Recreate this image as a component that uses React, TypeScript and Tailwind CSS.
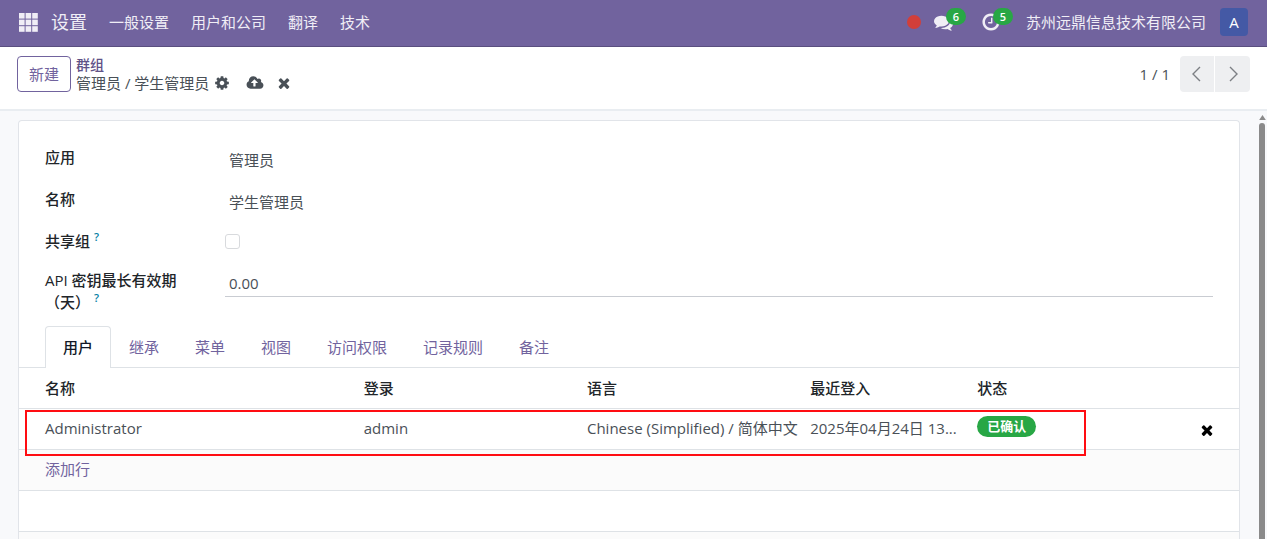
import { useState } from "react";
import type { ReactNode } from "react";

const COG =
  "M1152 896q0-106-75-181t-181-75-181 75-75 181 75 181 181 75 181-75 75-181zm512-109v222q0 12-8 23t-20 13l-185 28q-19 54-39 91 35 50 107 138 10 12 10 25t-9 23q-27 37-99 108t-94 71q-12 0-26-9l-138-108q-44 23-91 38-16 136-29 186-7 28-36 28h-222q-14 0-24.5-8.5t-11.5-21.5l-28-184q-49-16-90-37l-141 107q-10 9-25 9-14 0-25-11-126-114-165-168-7-10-7-23 0-12 8-23 15-21 51-66.5t54-70.5q-27-50-41-99l-183-27q-13-2-21-12.5t-8-23.5v-222q0-12 8-23t19-13l186-28q14-46 39-92-40-57-107-138-10-12-10-24 0-10 9-23 26-36 98.5-107.5t94.5-71.5q13 0 26 10l138 107q44-23 91-38 16-136 29-186 7-28 36-28h222q14 0 24.5 8.5t11.5 21.5l28 184q49 16 90 37l142-107q9-9 24-9 13 0 25 10 129 119 165 170 7 8 7 22 0 12-8 23-15 21-51 66.5t-54 70.5q26 50 41 98l183 28q13 2 21 12.5t8 23.5z";
const TIMES =
  "M1490 1322q0 40-28 68l-136 136q-28 28-68 28t-68-28l-294-294-294 294q-28 28-68 28t-68-28l-136-136q-28-28-28-68t28-68l294-294-294-294q-28-28-28-68t28-68l136-136q28-28 68-28t68 28l294 294 294-294q28-28 68-28t68 28l136 136q28 28 28 68t-28 68l-294 294 294 294q28 28 28 68z";
const CLOUD =
  "M1344 864q0-14-9-23l-352-352q-9-9-23-9t-23 9l-351 351q-10 12-10 24 0 14 9 23t23 9h224v352q0 13 9.5 22.5t22.5 9.5h192q13 0 22.5-9.5t9.500-22.5v-352h224q13 0 22.5-9.5t9.500-22.5zm640 288q0 159-112.5 271.5t-271.5 112.5h-1088q-185 0-316.5-131.5t-131.5-316.5q0-130 70-240t188-165q-2-30-2-43 0-212 150-362t362-150q156 0 285.5 87t188.5 231q71-62 166-62 106 0 181 75t75 181q0 76-41 138 130 31 213.5 135.5t83.5 238.5z";
const COMMENTS =
  "M1408 768q0 139-94 257t-256.5 186.5-353.5 68.5q-86 0-176-16-124 88-278 128-36 9-86 16h-3q-11 0-20.5-8t-11.5-21q-1-3-1-6.5t.5-6.5 2-6l2.500-5 3.500-5.500 4-5 4.500-5 4-4.500q5-6 23-25t26-29.500 22.500-29 25-38.500 20.500-44q-124-72-195-177t-71-224q0-139 94-257t256.500-186.500 353.500-68.500 353.500 68.500 256.500 186.500 94 257zm384 256q0 120-71 224.500t-195 176.500q10 24 20.500 44t25 38.500 22.500 29 26 29.500 23 25q1 1 4 4.500t4.500 5 4 5 3.500 5.500l2.500 5 2 6 .5 6.500-1 6.500q-3 14-13 22t-22 7q-50-7-86-16-154-40-278-128-90 16-176 16-271 0-472-132 58 4 88 4 161 0 309-45t264-129q125-92 192-212t67-254q0-77-23-152 129 71 204 178t75 230z";
const CLOCK =
  "M1024 544v448q0 14-9 23t-23 9h-320q-14 0-23-9t-9-23v-64q0-14 9-23t23-9h224v-352q0-14 9-23t23-9h64q14 0 23 9t9 23zm416 352q0-148-73-273t-198-198-273-73-273 73-198 198-73 273 73 273 198 198 273 73 273-73 198-198 73-273zm224 0q0 209-103 385.500t-279.500 279.500-385.500 103-385.500-103-279.500-279.500-103-385.500 103-385.500 279.500-279.500 385.500-103 385.500 103 279.500 279.500 103 385.500z";

function Glyph({ d, className, box = "0 0 1792 1792" }: { d: string; className: string; box?: string }) {
  return (
    <svg viewBox={box} className={className} fill="currentColor" aria-hidden="true">
      <path d={d} />
    </svg>
  );
}

function AppsIcon() {
  return (
    <svg viewBox="0 0 19 19" className="size-[19px]" fill="currentColor" aria-hidden="true">
      {[0, 6.6, 13.2].map((y) =>
        [0, 6.6, 13.2].map((x) => <rect key={`${x}-${y}`} x={x} y={y} width="5.6" height="5.6" />),
      )}
    </svg>
  );
}

function Chevron({ d }: { d: string }) {
  return (
    <svg viewBox="0 0 16 16" className="size-4" fill="none" stroke="currentColor" strokeWidth="1.4" aria-hidden="true">
      <path d={d} />
    </svg>
  );
}

function Tray({ label, count, children }: { label: string; count: number; children: ReactNode }) {
  return (
    <button type="button" aria-label={label} className="relative flex h-full items-center">
      {children}
      <span className="absolute top-2 left-3 flex h-[17px] w-5 items-center justify-center rounded-full bg-[#28a745] text-[11px] font-semibold text-white">
        {count}
      </span>
    </button>
  );
}

function Help() {
  return <span className="ml-1 inline-block align-top text-[11px] leading-[14px] font-semibold text-[#0180a5]">?</span>;
}

const MENUS = ["一般设置", "用户和公司", "翻译", "技术"];
const TABS = ["用户", "继承", "菜单", "视图", "访问权限", "记录规则", "备注"];

export default function App() {
  const [tab, setTab] = useState("用户");

  return (
    <div className="flex h-screen flex-col overflow-hidden bg-white font-['Open_Sans','Noto_Sans_CJK_SC',sans-serif] text-[15px] leading-[22px] text-[#495057]">
      <header className="flex h-[47px] shrink-0 items-center justify-between border-b border-[#5a4f7f] bg-[#71639e] pr-[19px] pb-[2px] pl-[19px] text-[#f0eef6]">
        <nav className="flex items-center">
          <button type="button" aria-label="应用菜单">
            <AppsIcon />
          </button>
          <a href="#" className="ml-[13px] text-lg">设置</a>
          <div className="ml-[22px] flex gap-[22px]">
            {MENUS.map((m) => (
              <a key={m} href="#">{m}</a>
            ))}
          </div>
        </nav>
        <div className="flex h-full items-center">
          <span className="size-[14px] rounded-full bg-[#d23f3a]" />
          <div className="ml-[13px] flex h-full gap-7">
            <Tray label="讨论" count={6}>
              <Glyph d={COMMENTS} className="size-[19px]" />
            </Tray>
            <Tray label="活动" count={5}>
              <Glyph d={CLOCK} className="size-5" />
            </Tray>
          </div>
          <span className="ml-[25px]">苏州远鼎信息技术有限公司</span>
          <button type="button" className="ml-[14px] size-7 rounded bg-[#4459a5] text-white">A</button>
        </div>
      </header>

      <div className="flex h-16 shrink-0 items-start justify-between border-b-2 border-[#e9edf1] pt-[9px] pr-[17px] pl-[17px]">
        <div className="flex">
          <button type="button" className="h-9 w-[54px] rounded border border-[#71639e] text-[#71639e]">新建</button>
          <div className="ml-[5px] flex flex-col">
            <a href="#" className="h-[18px] text-sm leading-[18px] font-medium text-[#5f5287]">群组</a>
            <div className="flex h-[18px] items-center leading-[18px]">
              <span>管理员 / 学生管理员</span>
              <button type="button" aria-label="操作" className="ml-[5px]"><Glyph d={COG} className="size-4" /></button>
              <button type="button" aria-label="保存" className="ml-4"><Glyph d={CLOUD} box="0 0 2048 1792" className="h-4 w-[18px]" /></button>
              <button type="button" aria-label="放弃" className="ml-3"><Glyph d={TIMES} className="size-4" /></button>
            </div>
          </div>
        </div>
        <div className="flex items-center">
          <span className="mr-[10px]">1 / 1</span>
          <div className="flex gap-px text-[#7c7f84]">
            <button type="button" aria-label="上一页" className="flex h-9 w-[34px] items-center justify-center rounded-l bg-[#eeeff1]"><Chevron d="M11 1 4 8l7 7" /></button>
            <button type="button" aria-label="下一页" className="flex h-9 w-[35px] items-center justify-center rounded-r bg-[#eeeff1]"><Chevron d="m5 1 7 7-7 7" /></button>
          </div>
        </div>
      </div>

      <div className="flex min-h-0 flex-1 bg-[#f8f9fb]">
        <main className="mt-[9px] ml-[18px] flex-1 overflow-hidden rounded-t border border-b-0 border-[#e1e4e9] bg-white">
          <form className="grid grid-cols-[180px_1fr] px-[26px] pt-[25px]">
            <label htmlFor="app" className="h-[42px] font-medium text-[#212529]">应用</label>
            <input id="app" defaultValue="管理员" className="h-[26px] px-1 outline-none" />
            <label htmlFor="name" className="h-[42px] font-medium text-[#212529]">名称</label>
            <input id="name" defaultValue="学生管理员" className="h-[26px] px-1 outline-none" />
            <label htmlFor="share" className="h-[39px] font-medium text-[#212529]">共享组<Help /></label>
            <input id="share" type="checkbox" className="mt-1 size-[15px] appearance-none rounded-[3px] border border-[#d8dadd] bg-white checked:bg-[#71639e]" />
            <label htmlFor="days" className="w-[150px] font-medium text-[#212529]">API 密钥最长有效期（天）<Help /></label>
            <input id="days" defaultValue="0.00" className="h-7 border-b border-[#c9ccd2] px-1 outline-none" />
          </form>

          <div role="tablist" className="mt-[13px] flex border-b border-[#dee2e6] px-[26px]">
            {TABS.map((t) => (
              <button
                key={t}
                type="button"
                role="tab"
                aria-selected={t === tab}
                onClick={() => setTab(t)}
                className={
                  t === tab
                    ? "-mb-px h-[42px] rounded-t border border-b-0 border-[#dee2e6] bg-white px-[17px] pb-[2px] font-medium text-[#111827]"
                    : "h-[41px] px-[18px] text-[#71639e]"
                }
              >
                {t}
              </button>
            ))}
          </div>

          <div className="relative">
            <table className="w-full table-fixed border-collapse text-left">
              <thead>
                <tr className="h-10 border-b border-[#dee2e6] text-[#212529]">
                  <th className="w-[27.6%] pl-[26px] font-medium">名称</th>
                  <th className="w-[18.3%] pl-2 font-medium">登录</th>
                  <th className="w-[18.3%] pl-2 font-medium">语言</th>
                  <th className="w-[13.7%] pl-2 font-medium">最近登入</th>
                  <th className="pl-2 font-medium">状态</th>
                  <th className="w-16" aria-label="删除" />
                </tr>
              </thead>
              <tbody>
                <tr className="h-[41px] border-b border-[#dee2e6]">
                  <td className="pb-[2px] pl-[26px]">Administrator</td>
                  <td className="pb-[2px] pl-2">admin</td>
                  <td className="pb-[2px] pl-2 whitespace-nowrap">Chinese (Simplified) / 简体中文</td>
                  <td className="pb-[2px] pl-2 whitespace-nowrap">2025年04月24日 13...</td>
                  <td className="pl-2">
                    <span className="mb-1 block h-[21px] w-[59px] rounded-full bg-[#28a745] text-center text-[13px] leading-5 font-semibold text-white">已确认</span>
                  </td>
                  <td className="text-center">
                    <button type="button" aria-label="删除行" className="align-middle text-black"><Glyph d={TIMES} className="size-4" /></button>
                  </td>
                </tr>
                <tr className="h-[41px] border-b border-[#dee2e6] bg-[#fbfbfb]">
                  <td colSpan={6} className="pb-[2px] pl-[26px]"><a href="#" className="text-[#71639e]">添加行</a></td>
                </tr>
                <tr className="h-[41px] border-b border-[#dee2e6]"><td colSpan={6} /></tr>
                <tr className="h-[41px] border-b border-[#dee2e6] bg-[#fbfbfb]"><td colSpan={6} /></tr>
              </tbody>
            </table>
            <div className="pointer-events-none absolute top-[42px] right-[153px] left-[6px] h-[46px] border-2 border-[#ff0d12]" />
          </div>
        </main>
        <div className="ml-[17px] flex w-[10px] shrink-0 flex-col items-center pt-1">
          <svg viewBox="0 0 8 6" className="h-[5px] w-[7px]" fill="#8a8a8a" aria-hidden="true"><path d="M4 0 8 6H0z" /></svg>
          <div className="mt-[3px] w-[6px] flex-1 rounded-t-full bg-[#8a8a8a]" />
        </div>
      </div>
    </div>
  );
}
